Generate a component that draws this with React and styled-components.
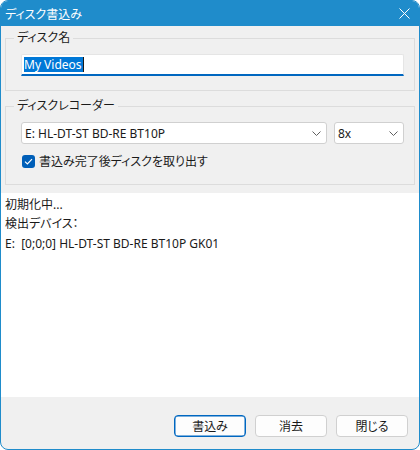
import React from 'react';
import styled, { createGlobalStyle } from 'styled-components';

const GlobalStyle = createGlobalStyle`
  html, body {
    margin: 0;
    padding: 0;
    background: #ffffff;
  }
  body {
    font-family: 'Noto Sans', 'Noto Sans CJK JP', sans-serif;
    font-size: 12px;
    font-feature-settings: 'palt';
    color: #1a1a1a;
  }
`;

const Window = styled.div`
  box-sizing: border-box;
  width: 420px;
  height: 450px;
  display: flex;
  flex-direction: column;
  background: #f0f0f0;
  border: 1px solid #1f8ccb;
  border-radius: 8px;
  overflow: hidden;
`;

const TitleBar = styled.div`
  height: 25px;
  flex: none;
  display: flex;
  align-items: center;
  justify-content: space-between;
  padding: 0 6px 0 4px;
  background: #1f8ccb;
  color: #ffffff;
  font-size: 12px;
`;

const CloseButton = styled.div`
  width: 12px;
  height: 12px;
  display: flex;
  align-items: center;
  justify-content: center;
  margin-right: 3px;
`;

const Content = styled.div`
  padding: 4px 4px 0 4px;
  display: flex;
  flex-direction: column;
  gap: 7px;
`;

const Group = styled.fieldset`
  margin: 0;
  padding: 0;
  border: 1px solid #dcdcdc;
  min-width: 0;
`;

const Legend = styled.legend`
  margin-left: 8px;
  padding: 0 3px;
  line-height: 16px;
  font-size: 12px;
  color: #1a1a1a;
`;

const GroupBody = styled.div`
  padding: ${(p) => p.$pad};
  display: flex;
  flex-direction: column;
  gap: 6px;
`;

const TextBox = styled.div`
  box-sizing: border-box;
  height: 22px;
  display: flex;
  align-items: center;
  padding: 0 2px;
  background: #ffffff;
  border: 1px solid #e5e5e5;
  border-bottom: 2px solid #0067c0;
  border-radius: 2px 2px 0 0;
`;

const Selected = styled.span`
  background: #0078d7;
  color: #ffffff;
  line-height: 15px;
  padding: 0 1px 0 0;
`;

const Caret = styled.span`
  width: 1px;
  height: 15px;
  background: #1a1a1a;
`;

const Row = styled.div`
  display: flex;
  gap: 7px;
`;

const Combo = styled.div`
  box-sizing: border-box;
  height: 22px;
  flex: ${(p) => (p.$grow ? '1' : 'none')};
  width: ${(p) => (p.$grow ? 'auto' : '70px')};
  display: flex;
  align-items: center;
  justify-content: space-between;
  padding: 0 5px 0 3px;
  background: #ffffff;
  border: 1px solid #d0d0d0;
  border-radius: 3px;
`;

const CheckRow = styled.label`
  display: flex;
  align-items: center;
  gap: 4px;
  height: 20px;
  margin-top: 1px;
  padding-left: 1px;
`;

const CheckBox = styled.span`
  width: 13px;
  height: 13px;
  border-radius: 3px;
  background: #005fb8;
  display: flex;
  align-items: center;
  justify-content: center;
`;

const Log = styled.div`
  margin-top: 8px;
  height: 202px;
  background: #ffffff;
  padding: 2px 4px 0 4px;
  line-height: 19px;
  color: #1a1a1a;
`;

const LogLine = styled.div`
  white-space: pre;
  line-height: ${(p) => p.$h || '19px'};
`;

const Footer = styled.div`
  flex: 1;
  display: flex;
  justify-content: flex-end;
  align-items: flex-start;
  gap: 9px;
  padding: 18px 11px 0 0;
`;

const Button = styled.button`
  box-sizing: border-box;
  width: 72px;
  height: 22px;
  padding: 0;
  font-family: inherit;
  font-size: 12px;
  font-feature-settings: 'palt';
  color: #1a1a1a;
  background: #fdfdfd;
  border: 1px solid ${(p) => (p.$primary ? '#0067c0' : '#d0d0d0')};
  box-shadow: ${(p) => (p.$primary ? 'inset 0 0 0 0.5px #0067c0' : 'none')};
  border-radius: 4px;
`;

const Chevron = () => (
  <svg width="9" height="5" viewBox="0 0 9 5">
    <path d="M0.5 0.5 L4.5 4.5 L8.5 0.5" fill="none" stroke="#606060" strokeWidth="1" />
  </svg>
);

const App = () => {
  return (
    <>
      <GlobalStyle />
      <Window>
        <TitleBar>
          <span>ディスク書込み</span>
          <CloseButton>
            <svg width="11" height="11" viewBox="0 0 11 11">
              <path d="M0.5 0.5 L10.5 10.5 M10.5 0.5 L0.5 10.5" stroke="#ffffff" strokeWidth="1" />
            </svg>
          </CloseButton>
        </TitleBar>
        <Content>
          <Group>
            <Legend>ディスク名</Legend>
            <GroupBody $pad="8px 10px 14px 15px">
              <TextBox>
                <Selected>My Videos</Selected>
                <Caret />
              </TextBox>
            </GroupBody>
          </Group>
          <Group>
            <Legend>ディスクレコーダー</Legend>
            <GroupBody $pad="8px 10px 13px 15px">
              <Row>
                <Combo $grow>
                  <span>E: HL-DT-ST BD-RE BT10P</span>
                  <Chevron />
                </Combo>
                <Combo>
                  <span>8x</span>
                  <Chevron />
                </Combo>
              </Row>
              <CheckRow>
                <CheckBox>
                  <svg width="9" height="7" viewBox="0 0 9 7">
                    <path d="M1 3.6 L3.4 6 L8 1.2" fill="none" stroke="#ffffff" strokeWidth="1.2" />
                  </svg>
                </CheckBox>
                <span>書込み完了後ディスクを取り出す</span>
              </CheckRow>
            </GroupBody>
          </Group>
        </Content>
        <Log>
          <LogLine>初期化中...</LogLine>
          <LogLine $h="20px">検出デバイス：</LogLine>
          <LogLine $h="20px">{'E:  [0;0;0] HL-DT-ST BD-RE BT10P GK01'}</LogLine>
        </Log>
        <Footer>
          <Button $primary>書込み</Button>
          <Button>消去</Button>
          <Button>閉じる</Button>
        </Footer>
      </Window>
    </>
  );
};

export default App;
